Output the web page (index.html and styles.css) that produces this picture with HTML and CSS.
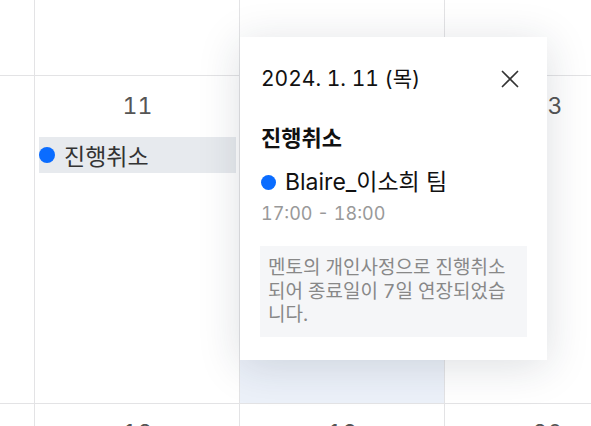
FILE: index.html
```html
<!DOCTYPE html>
<html lang="ko">
<head>
<meta charset="utf-8">
<title>Calendar</title>
<link rel="stylesheet" href="styles.css">
</head>
<body>
<div class="calendar">
  <div class="row row-top">
    <div class="cell cell-edge"></div>
    <div class="cell"></div>
    <div class="cell"></div>
    <div class="cell"></div>
  </div>
  <div class="row row-mid">
    <div class="cell cell-edge"></div>
    <div class="cell">
      <div class="day">11</div>
      <div class="event-bar"><span class="dot"></span><span class="event-label">진행취소</span></div>
    </div>
    <div class="cell cell-selected">
      <div class="day">12</div>
    </div>
    <div class="cell">
      <div class="day">13</div>
    </div>
  </div>
  <div class="row row-bottom">
    <div class="cell cell-edge"></div>
    <div class="cell"><div class="day">18</div></div>
    <div class="cell"><div class="day">19</div></div>
    <div class="cell"><div class="day">20</div></div>
  </div>
</div>

<div class="popup">
  <div class="popup-head">
    <div class="popup-date">2024. 1. 11 (목)</div>
    <button class="close" aria-label="닫기">
      <svg width="18" height="18" viewBox="0 0 18 18" fill="none" stroke="#333" stroke-width="1.7" stroke-linecap="round">
        <path d="M1.5 1.5 L16.5 16.5 M16.5 1.5 L1.5 16.5"/>
      </svg>
    </button>
  </div>
  <div class="popup-status">진행취소</div>
  <div class="popup-event"><span class="dot"></span><span>Blaire_이소희 팀</span></div>
  <div class="popup-time">17:00 - 18:00</div>
  <div class="popup-note">멘토의 개인사정으로 진행취소되어 종료일이 7일 연장되었습니다.</div>
</div>
</body>
</html>
```

FILE: styles.css
```css
* { box-sizing: border-box; }

html, body {
  margin: 0;
  padding: 0;
  width: 591px;
  height: 426px;
  overflow: hidden;
  background: #fff;
  font-family: "Inter", "Noto Sans CJK KR", sans-serif;
  font-variant-numeric: tabular-nums;
}

.calendar {
  display: flex;
  flex-direction: column;
  width: 650px;
}

.row {
  display: grid;
  grid-template-columns: 35px 205px 205px 205px;
}

.row-top { height: 75px; }
.row-mid { height: 328px; border-top: 1px solid #e3e3e5; }
.row-bottom { height: 60px; border-top: 1px solid #e3e3e5; }

.cell {
  border-right: 1px solid #e3e3e5;
  padding: 0 3px 0 4px;
  display: flex;
  flex-direction: column;
  align-items: stretch;
}

.cell-selected { background: #ecf1f9; }

.day {
  text-align: center;
  font-size: 23px;
  line-height: 26px;
  color: #555;
  padding-top: 17px;
}

.row-bottom .day { padding-top: 16px; }

.event-bar {
  margin-top: 18px;
  height: 36px;
  background: #e7eaee;
  display: flex;
  align-items: center;
  gap: 9px;
}

.dot {
  width: 16px;
  height: 16px;
  border-radius: 50%;
  background: #0a6cff;
  flex: none;
}

.event-label {
  font-size: 23px;
  color: #333;
}

.popup {
  position: absolute;
  left: 240px;
  top: 37px;
  width: 307px;
  background: #fff;
  padding: 28px 20px 23px 21px;
  box-shadow: 0 6px 40px rgba(30, 40, 60, 0.15);
  display: flex;
  flex-direction: column;
}

.popup-head {
  display: flex;
  justify-content: space-between;
  align-items: center;
  height: 28px;
}

.popup-date {
  font-size: 21px;
  line-height: 28px;
  color: #111;
}

.close {
  width: 36px;
  height: 36px;
  border: 0;
  background: none;
  padding: 0;
  display: flex;
  align-items: center;
  justify-content: center;
  margin-right: -1px;
}

.popup-status {
  margin-top: 31px;
  font-size: 22px;
  line-height: 28px;
  font-weight: 700;
  color: #111;
}

.popup-event {
  margin-top: 16px;
  display: flex;
  align-items: center;
  gap: 9px;
  font-size: 23px;
  line-height: 28px;
  color: #111;
}

.popup-event .dot { width: 15px; height: 15px; }

.popup-time {
  margin-top: 6px;
  font-size: 18px;
  line-height: 24px;
  color: #999;
}

.popup-note {
  margin-top: 20px;
  margin-left: -1px;
  background: #f5f6f8;
  padding: 10px 10px 10px 8px;
  font-size: 19px;
  line-height: 23.5px;
  color: #888;
}
```
